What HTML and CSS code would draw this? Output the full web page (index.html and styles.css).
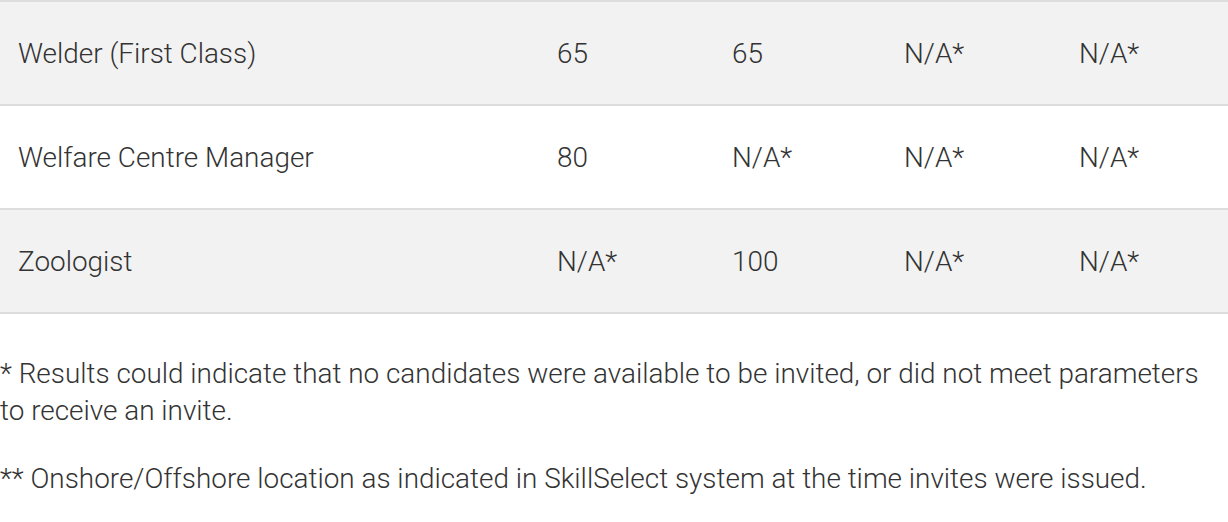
FILE: index.html
```html
<!DOCTYPE html>
<html>
<head>
<meta charset="utf-8">
<link rel="stylesheet" href="styles.css">
</head>
<body>
<table class="results">
  <colgroup>
    <col class="c-occ"><col class="c-n"><col class="c-n2"><col class="c-n"><col class="c-last">
  </colgroup>
  <tbody>
    <tr class="shade"><td>Welder (First Class)</td><td>65</td><td>65</td><td>N/A*</td><td>N/A*</td></tr>
    <tr><td>Welfare Centre Manager</td><td>80</td><td>N/A*</td><td>N/A*</td><td>N/A*</td></tr>
    <tr class="shade"><td>Zoologist</td><td>N/A*</td><td>100</td><td>N/A*</td><td>N/A*</td></tr>
  </tbody>
</table>
<div class="notes">
  <p>* Results could indicate that no candidates were available to be invited, or did not meet parameters to receive an invite.</p>
  <p>** Onshore/Offshore location as indicated in SkillSelect system at the time invites were issued.</p>
</div>
</body>
</html>
```

FILE: styles.css
```css
html, body {
  margin: 0;
  padding: 0;
  background: #fff;
}
body {
  font-family: Roboto, "Liberation Sans", sans-serif;
  font-weight: 300;
  font-size: 27.9px;
  color: #333;
  width: 1228px;
  overflow: hidden;
}
.results {
  border-collapse: collapse;
  table-layout: fixed;
  width: 1260px;
  margin: 0 0 41px 0;
}
.c-occ { width: 539px; }
.c-n { width: 175px; }
.c-n2 { width: 172px; }
.c-last { width: 199px; }
.results tr {
  border-top: 2px solid #ddd;
  border-bottom: 2px solid #ddd;
}
.results tr.shade { background: #f2f2f2; }
.results td {
  height: 104px;
  padding: 0 0 0 18px;
  vertical-align: middle;
  line-height: 37px;
  box-sizing: border-box;
}
.notes p {
  margin: 0 0 31px 0;
  line-height: 37px;
  width: 1228px;
}
```
